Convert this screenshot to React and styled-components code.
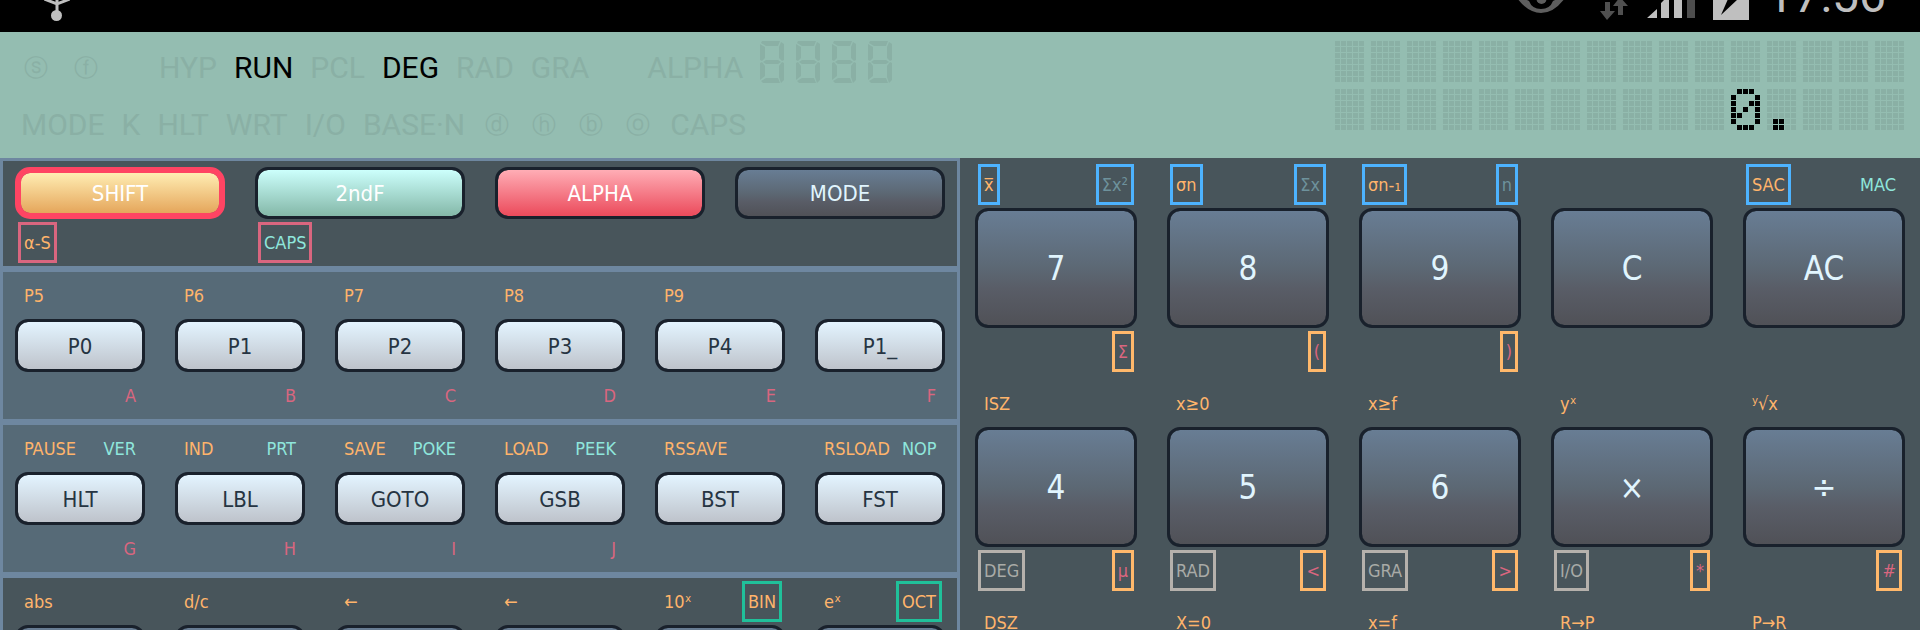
import React from "react";
import styled, { createGlobalStyle, css } from "styled-components";

const GlobalStyle = createGlobalStyle`
  *, *::before, *::after { box-sizing: border-box; }
  body { margin: 0; background: #48555b; }
`;

const ink = {
  orange: "#ffb46b",
  teal: "#8fe6dc",
  dim: "#6e929c",
  pink: "#d9667f",
  grey: "#a9aba7",
};

const frame = {
  pink: "#d9667f",
  blue: "#4db3ff",
  orange: "#ffb86b",
  grey: "#b5b1ac",
  green: "#20c09a",
};

const faces = {
  shift: css`
    background-image: linear-gradient(#ffedb3, #e5a65b);
    color: #ffffff;
  `,
  second: css`
    background-image: linear-gradient(#ccfffc, #84b8a8);
    color: #ffffff;
  `,
  alpha: css`
    background-image: linear-gradient(#ffadb5, #eb4a5b);
    color: #ffffff;
  `,
  dark: css`
    background-image: linear-gradient(#687d94, #5c6874 50%, #595d67 68%, #505157);
    color: #e1f5fe;
  `,
  light: css`
    background-image: linear-gradient(#e3f4ff, #bec3cb);
    color: #263442;
  `,
};

const Screen = styled.main`
  height: 100vh;
  overflow: hidden;
  display: flex;
  flex-direction: column;
  font-family: "DejaVu Sans Condensed", "DejaVu Sans", sans-serif;
`;

const StatusBar = styled.header`
  flex: none;
  height: 32px;
  padding: 0 34px 11px 44px;
  display: flex;
  align-items: flex-end;
  gap: 17px;
  overflow: hidden;
  background: #000000;
  color: #bfbfbf;
`;

const StatusIcon = styled.svg`
  flex: none;
  display: block;
  height: 21px;
  ${(p) => p.$pushRight && "margin-left: auto;"}
`;

const Clock = styled.time`
  font: 400 48px/50px Roboto, sans-serif;
`;

const Lcd = styled.section`
  flex: none;
  display: flex;
  justify-content: space-between;
  padding: 9px 16px 7px 21px;
  background: #94bdb1;
`;

const Annunciators = styled.div`
  display: flex;
  flex-direction: column;
  gap: 4px;
`;

const AnnunciatorRow = styled.div`
  display: flex;
  align-items: center;
  gap: 58px;
`;

const Group = styled.div`
  display: flex;
  align-items: center;
  gap: ${(p) => (p.$wide ? 20 : 17)}px;
`;

const Indicator = styled.span`
  font: 400 30px/53px Roboto, sans-serif;
  color: ${(p) => (p.$on ? "#000000" : "#8ab0a5")};
`;

const Ring = styled.span`
  width: 30px;
  font: 24px/24px "DejaVu Sans", sans-serif;
  text-align: center;
  color: #8ab0a5;
`;

const Segments = styled.svg`
  align-self: flex-start;
  display: block;
`;

const Matrix = styled.div`
  flex: none;
  display: flex;
  flex-direction: column;
  gap: 7px;
`;

const MatrixRow = styled.div`
  display: flex;
  gap: 7px;
`;

const Cell = styled.svg`
  display: block;
`;

const Keyboard = styled.div`
  flex: none;
  display: grid;
  grid-template-columns: 1fr 1fr;
`;

const LeftPane = styled.div`
  min-width: 0;
`;

const Section = styled.section`
  display: grid;
  grid-template-columns: repeat(${(p) => p.$columns}, minmax(0, 1fr));
  column-gap: 30px;
  padding: ${(p) => (p.$header ? "6px 12px 3px" : "3px 12px")};
  border: 3px solid #6e87a0;
  background: ${(p) => (p.$raised ? "#566a77" : "#48555b")};
`;

const RightPane = styled.div`
  min-width: 0;
  display: grid;
  align-content: start;
  grid-template-columns: repeat(5, minmax(0, 1fr));
  gap: 11px 30px;
  padding: 6px 15px;
  background: #48555b;
`;

const KeyCell = styled.div`
  display: flex;
  flex-direction: column;
  gap: 3px;
`;

const Labels = styled.div`
  height: 41px;
  display: flex;
  justify-content: space-between;
  padding: 0 3px;
`;

const Label = styled.span`
  flex: none;
  padding: 0 3px;
  border: 3px solid ${(p) => (p.$frame ? frame[p.$frame] : "transparent")};
  font-size: 18px;
  line-height: 35px;
  white-space: nowrap;
  color: ${(p) => ink[p.$ink]};
`;

const Spacer = styled.span`
  flex: none;
`;

const Key = styled.button`
  width: 100%;
  height: ${(p) => (p.$big ? 120 : 53)}px;
  padding: ${(p) => (p.$big ? 0 : 2)}px 0 0;
  border: ${(p) => (p.$active ? "6px solid #ff4463" : "3px solid #19212c")};
  border-radius: ${(p) => (p.$active ? 15 : 13)}px;
  background-origin: padding-box;
  background-clip: padding-box;
  background-color: ${(p) => (p.$active ? "#ff4463" : "#19212c")};
  ${(p) => faces[p.$face]}
  font-family: inherit;
  font-size: ${(p) => (p.$big ? 33 : 22)}px;
  line-height: 1;
`;

const HeaderKey = styled(Key)`
  height: 52px;
`;

function LabelRow({ items }) {
  const [left, right] = items || [];
  return (
    <Labels>
      {left ? <Label $ink={left[1]} $frame={left[2]}>{left[0]}</Label> : <Spacer />}
      {right && <Label $ink={right[1]} $frame={right[2]}>{right[0]}</Label>}
    </Labels>
  );
}

function KeyWithLabels({ name, face, top, bottom, big }) {
  return (
    <KeyCell>
      <LabelRow items={top} />
      {face && <Key type="button" $face={face} $big={big}>{name}</Key>}
      {bottom !== undefined && <LabelRow items={bottom} />}
    </KeyCell>
  );
}

const modeKeys = [
  { name: "SHIFT", face: "shift", active: true, bottom: [["α-S", "orange", "pink"]] },
  { name: "2ndF", face: "second", bottom: [["CAPS", "teal", "pink"]] },
  { name: "ALPHA", face: "alpha" },
  { name: "MODE", face: "dark" },
];

const o = (s, f) => [s, "orange", f];
const t = (s) => [s, "teal"];
const p = (s, f) => [s, "pink", f];

const programKeys = [
  { name: "P0", top: [o("P5")], bottom: [null, p("A")] },
  { name: "P1", top: [o("P6")], bottom: [null, p("B")] },
  { name: "P2", top: [o("P7")], bottom: [null, p("C")] },
  { name: "P3", top: [o("P8")], bottom: [null, p("D")] },
  { name: "P4", top: [o("P9")], bottom: [null, p("E")] },
  { name: "P1_", top: [], bottom: [null, p("F")] },
];

const flowKeys = [
  { name: "HLT", top: [o("PAUSE"), t("VER")], bottom: [null, p("G")] },
  { name: "LBL", top: [o("IND"), t("PRT")], bottom: [null, p("H")] },
  { name: "GOTO", top: [o("SAVE"), t("POKE")], bottom: [null, p("I")] },
  { name: "GSB", top: [o("LOAD"), t("PEEK")], bottom: [null, p("J")] },
  { name: "BST", top: [o("RSSAVE")], bottom: [] },
  { name: "FST", top: [o("RSLOAD"), t("NOP")], bottom: [] },
];

const functionKeys = [
  { top: [o("abs")] },
  { top: [o("d/c")] },
  { top: [o("←")] },
  { top: [o("←")] },
  { top: [o("10ˣ"), o("BIN", "green")] },
  { top: [o("eˣ"), o("OCT", "green")] },
];

const numberKeys = [
  { name: "7", top: [o("x̅", "blue"), ["Σx²", "dim", "blue"]], bottom: [null, p("Σ", "orange")] },
  { name: "8", top: [o("σn", "blue"), ["Σx", "dim", "blue"]], bottom: [null, p("(", "orange")] },
  { name: "9", top: [o("σn-₁", "blue"), ["n", "dim", "blue"]], bottom: [null, p(")", "orange")] },
  { name: "C", top: [], bottom: [] },
  { name: "AC", top: [o("SAC", "blue"), t("MAC")], bottom: [] },
  { name: "4", top: [o("ISZ")], bottom: [["DEG", "grey", "grey"], p("µ", "orange")] },
  { name: "5", top: [o("x≥0")], bottom: [["RAD", "grey", "grey"], p("<", "orange")] },
  { name: "6", top: [o("x≥f")], bottom: [["GRA", "grey", "grey"], p(">", "orange")] },
  { name: "×", top: [o("yˣ")], bottom: [["I/O", "grey", "grey"], p("*", "orange")] },
  { name: "÷", top: [o("ʸ√x")], bottom: [null, p("#", "orange")] },
];

const nextLabels = ["DSZ", "X=0", "x=f", "R→P", "P→R"];

const glyphs = {
  "0": [".###.", "#...#", "#..##", "#.#.#", "##..#", "#...#", ".###."],
  ".": [".....", ".....", ".....", ".....", ".....", ".##..", ".##.."],
  " ": [".....", ".....", ".....", ".....", ".....", ".....", "....."],
};

function MatrixCell({ char }) {
  const dots = glyphs[char];
  const ghost = char === "0" ? "#92baae" : "#8ab0a5";
  return (
    <Cell width="29" height="41" viewBox="0 0 29 41" shapeRendering="crispEdges" aria-hidden="true">
      {dots.map((row, y) =>
        [...row].map((d, x) => (
          <rect key={`${x}-${y}`} x={x * 6} y={y * 6} width="5" height="5" fill={d === "#" ? "#000000" : ghost} />
        ))
      )}
    </Cell>
  );
}

function SevenSegments() {
  const digit = "M2 0H20L18 5H6L1 2Z M21 1L24 3V19L22 20L19 17V6Z M24 22V39L21 42L19 36V25L22 21Z M3 42L1 40L6 37H18L20 42Z M0 22L2 21L5 25V35L0 39Z M0 3L5 6V17L2 20L0 19Z M3 21L6 19H18L21 21L18 23H6Z";
  return (
    <Segments width="132" height="42" viewBox="0 0 132 42" fill="#8ab0a5" aria-hidden="true">
      {[0, 36, 72, 108].map((x) => (
        <path key={x} d={digit} transform={`translate(${x} 0)`} />
      ))}
    </Segments>
  );
}

function Status() {
  return (
    <StatusBar>
      <StatusIcon width="26" viewBox="0 0 26 21" aria-hidden="true">
        <path d="M0 -1L13 4L26 -1M13 -2V12" fill="none" stroke="#bfbfbf" strokeWidth="3" />
        <circle cx="12.5" cy="15.5" r="5.5" fill="#bfbfbf" />
      </StatusIcon>
      <StatusIcon $pushRight width="65" viewBox="0 0 65 21" aria-hidden="true">
        <path d="M0 -2Q11 13 24 13Q37 13 48 -2H42L36 1Q33 9 24 9Q15 9 12 1L6 -2Z" fill="#5e5e5e" />
        <circle cx="24.5" cy="-1" r="5" fill="#5e5e5e" />
      </StatusIcon>
      <StatusIcon width="30" viewBox="0 0 30 21" fill="#505050" aria-hidden="true">
        <path d="M6 2H11V11H16L8 20L1 11H6Z" />
        <path d="M19 15V6H14L21 -3L29 6H24V15Z" />
      </StatusIcon>
      <StatusIcon width="50" viewBox="0 0 50 21" fill="#bfbfbf" aria-hidden="true">
        <path d="M1 18L11 9V18Z M15 3L18 0H23V18H15Z M28 0H36V18H28Z" />
        <path d="M41 0H49V18H41Z" fill="#4d4d4d" />
      </StatusIcon>
      <StatusIcon width="36" viewBox="0 0 36 21" aria-hidden="true">
        <path d="M0 0H36V20H0Z" fill="#bfbfbf" />
        <path d="M15 -1H25L8 15Z" fill="#000000" />
      </StatusIcon>
      <Clock>17:56</Clock>
    </StatusBar>
  );
}

export default function App() {
  return (
    <Screen>
      <GlobalStyle />
      <Status />
      <Lcd>
        <Annunciators>
          <AnnunciatorRow>
            <Group $wide>
              <Ring>ⓢ</Ring>
              <Ring>ⓕ</Ring>
            </Group>
            <Group>
              <Indicator>HYP</Indicator>
              <Indicator $on>RUN</Indicator>
              <Indicator>PCL</Indicator>
              <Indicator $on>DEG</Indicator>
              <Indicator>RAD</Indicator>
              <Indicator>GRA</Indicator>
            </Group>
            <Group>
              <Indicator>ALPHA</Indicator>
              <SevenSegments />
            </Group>
          </AnnunciatorRow>
          <Group>
            {["MODE", "K", "HLT", "WRT", "I/O", "BASE·N"].map((s) => (
              <Indicator key={s}>{s}</Indicator>
            ))}
            {["ⓓ", "ⓗ", "ⓑ", "ⓞ"].map((s) => (
              <Ring key={s}>{s}</Ring>
            ))}
            <Indicator>CAPS</Indicator>
          </Group>
        </Annunciators>
        <Matrix role="img" aria-label="0.">
          {["                ", "           0.   "].map((line, i) => (
            <MatrixRow key={i}>
              {[...line].map((c, j) => (
                <MatrixCell key={j} char={c} />
              ))}
            </MatrixRow>
          ))}
        </Matrix>
      </Lcd>
      <Keyboard>
        <LeftPane>
          <Section $columns={4} $header>
            {modeKeys.map((k) => (
              <KeyCell key={k.name}>
                <HeaderKey type="button" $face={k.face} $active={k.active}>{k.name}</HeaderKey>
                <LabelRow items={k.bottom} />
              </KeyCell>
            ))}
          </Section>
          <Section $columns={6} $raised>
            {programKeys.map((k) => (
              <KeyWithLabels key={k.name} face="light" {...k} />
            ))}
          </Section>
          <Section $columns={6} $raised>
            {flowKeys.map((k) => (
              <KeyWithLabels key={k.name} face="light" {...k} />
            ))}
          </Section>
          <Section $columns={6}>
            {functionKeys.map((k, i) => (
              <KeyWithLabels key={i} face="dark" {...k} />
            ))}
          </Section>
        </LeftPane>
        <RightPane>
          {numberKeys.map((k) => (
            <KeyWithLabels key={k.name} face="dark" big {...k} />
          ))}
          {nextLabels.map((s) => (
            <KeyWithLabels key={s} top={[o(s)]} />
          ))}
        </RightPane>
      </Keyboard>
    </Screen>
  );
}
